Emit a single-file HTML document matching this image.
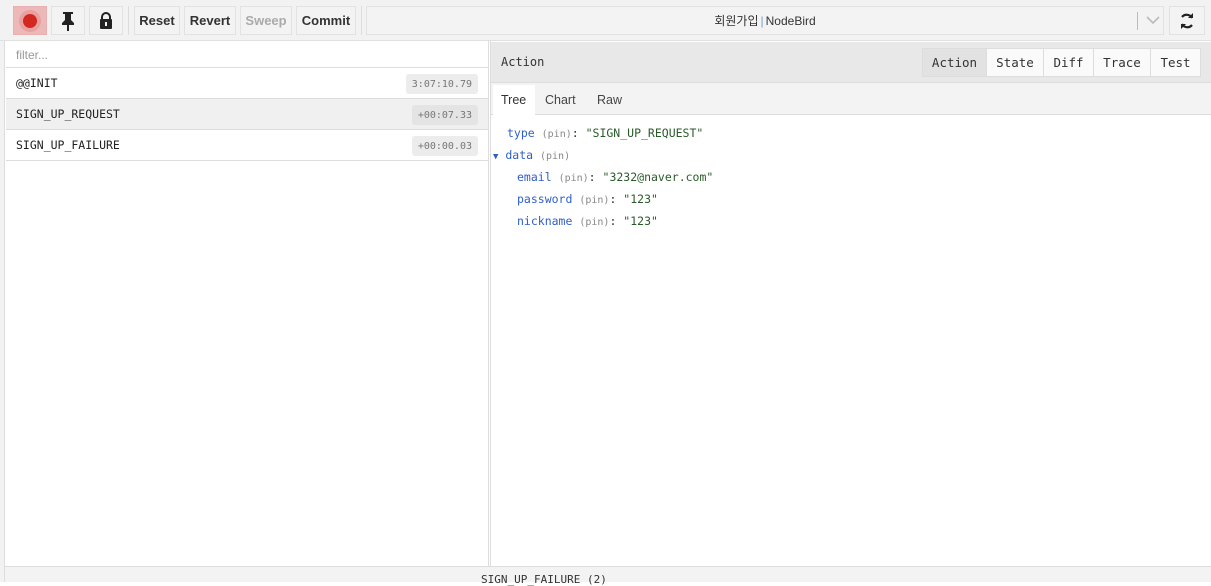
<!DOCTYPE html>
<html><head><meta charset="utf-8"><style>
*{box-sizing:border-box;margin:0;padding:0}
body{width:1211px;height:582px;overflow:hidden;background:#fff;font-family:"Liberation Sans","Noto Sans CJK KR",sans-serif;position:relative}
.a{position:absolute}
.mono{font-family:"DejaVu Sans Mono","Liberation Mono",monospace}
.btn{position:absolute;top:6px;height:29px;background:#f3f3f3;border:1px solid #e2e2e2;font-size:13px;font-weight:bold;color:#333;display:flex;align-items:center;justify-content:center}
.tab{position:absolute;top:48px;height:29px;background:#fafafa;border:1px solid #ddd;font-size:12.5px;color:#333;display:flex;align-items:center;justify-content:center}
.row{position:absolute;left:6px;width:482px;height:31px;border-bottom:1px solid #ddd;font-size:11.5px;color:#222;padding:8px 0 0 10px}
.time{position:absolute;right:10px;top:6px;height:20px;background:#ececec;border-radius:3px;font-size:10px;color:#777;padding:5px 6px 0}
.k{color:#2f5fc9}.p{color:#888;font-size:10px}.s{color:#2a5a2a}
.ln{position:absolute;font-size:11.5px;color:#333}
</style></head><body>
<div class="a" style="left:0;top:0;width:1211px;height:41px;background:#f2f2f2;border-bottom:1px solid #e0e0e0"></div>
<div class="a" style="left:0;top:41px;width:5px;height:541px;background:#f2f2f2;border-right:1px solid #ddd"></div>
<div class="btn" style="left:13px;width:34px;background:#ecb8b8;border-color:#e8b0b0"><div style="width:14px;height:14px;border-radius:50%;background:#d3281f;box-shadow:0 0 0 4px #e8a0a0"></div></div>
<div class="btn" style="left:51px;width:34px"><svg width="16" height="20" viewBox="0 0 16 20"><path d="M3 1h10v2h-2v6l3 3v2H9v6H7v-6H2v-2l3-3V3H3z" fill="#222"/></svg></div>
<div class="btn" style="left:89px;width:34px"><svg width="14" height="17" viewBox="0 0 14 17"><path d="M3 7V5a4 4 0 0 1 8 0v2" fill="none" stroke="#222" stroke-width="2"/><rect x="1" y="7" width="12" height="10" rx="1" fill="#222"/><rect x="6" y="10" width="2" height="4" fill="#f3f3f3"/></svg></div>
<div class="a" style="left:128px;top:6px;width:1px;height:29px;background:#ddd"></div>
<div class="btn" style="left:134px;width:46px">Reset</div>
<div class="btn" style="left:184px;width:52px">Revert</div>
<div class="btn" style="left:240px;width:52px;color:#aaa">Sweep</div>
<div class="btn" style="left:296px;width:60px">Commit</div>
<div class="a" style="left:361px;top:6px;width:1px;height:29px;background:#ddd"></div>
<div class="btn" style="left:366px;width:798px;font-weight:normal;font-size:12px;color:#333">회원가입<span style="color:#6aa0d8;margin:0 2px">|</span>NodeBird</div>
<div class="a" style="left:1137px;top:12px;width:1px;height:18px;background:#bbb"></div>
<svg class="a" style="left:1146px;top:16px" width="14" height="9" viewBox="0 0 14 9"><path d="M1 1l6 6 6-6" fill="none" stroke="#bbb" stroke-width="1.6"/></svg>
<div class="btn" style="left:1169px;width:36px"><svg width="16" height="18" viewBox="0 0 16 18"><path d="M13 6A6 6 0 0 0 3 5M3 12a6 6 0 0 0 10 1" fill="none" stroke="#222" stroke-width="2.2"/><path d="M9 6h5V1zM7 12H2v5z" fill="#222"/></svg></div>

<div class="a" style="left:6px;top:42px;width:482px;height:26px;border-bottom:1px solid #ddd;font-size:12px;color:#999;padding:6px 10px">filter...</div>
<div class="row mono" style="top:68px">@@INIT<span class="time">3:07:10.79</span></div>
<div class="row mono" style="top:99px;background:#f0f0f0">SIGN_UP_REQUEST<span class="time" style="background:#e4e4e4">+00:07.33</span></div>
<div class="row mono" style="top:130px">SIGN_UP_FAILURE<span class="time">+00:00.03</span></div>

<div class="a" style="left:488px;top:41px;width:3px;height:525px;border-left:1px solid #ddd;border-right:1px solid #ddd"></div>
<div class="a mono" style="left:491px;top:42px;width:720px;height:41px;background:#e8e8e8;border-bottom:1px solid #ddd;font-size:12px;color:#333;padding:13px 10px">Action</div>
<div class="tab mono" style="left:922px;width:65px;background:#e2e2e2">Action</div>
<div class="tab mono" style="left:986px;width:58px">State</div>
<div class="tab mono" style="left:1043px;width:51px">Diff</div>
<div class="tab mono" style="left:1093px;width:58px">Trace</div>
<div class="tab mono" style="left:1150px;width:51px">Test</div>
<div class="a" style="left:491px;top:83px;width:720px;height:32px;background:#f3f3f3;border-bottom:1px solid #ddd"></div>
<div class="a" style="left:493px;top:85px;width:42px;height:30px;background:#fff;font-size:12.5px;color:#333;padding:8px 8px">Tree</div>
<div class="a" style="left:545px;top:93px;font-size:12.5px;color:#444">Chart</div>
<div class="a" style="left:597px;top:93px;font-size:12.5px;color:#444">Raw</div>

<div class="ln mono" style="left:507px;top:126px"><span class="k">type</span> <span class="p">(pin)</span>: <span class="s">"SIGN_UP_REQUEST"</span></div>
<div class="ln mono" style="left:493px;top:148px"><span class="k" style="font-size:9px">▼</span> <span class="k">data</span> <span class="p">(pin)</span></div>
<div class="ln mono" style="left:517px;top:170px"><span class="k">email</span> <span class="p">(pin)</span>: <span class="s">"3232@naver.com"</span></div>
<div class="ln mono" style="left:517px;top:192px"><span class="k">password</span> <span class="p">(pin)</span>: <span class="s">"123"</span></div>
<div class="ln mono" style="left:517px;top:214px"><span class="k">nickname</span> <span class="p">(pin)</span>: <span class="s">"123"</span></div>

<div class="a mono" style="left:5px;top:566px;width:1206px;height:16px;background:#f3f3f3;border-top:1px solid #ddd;font-size:11px;color:#333;padding:6px 0 0 476px">SIGN_UP_FAILURE (2)</div>
</body></html>
